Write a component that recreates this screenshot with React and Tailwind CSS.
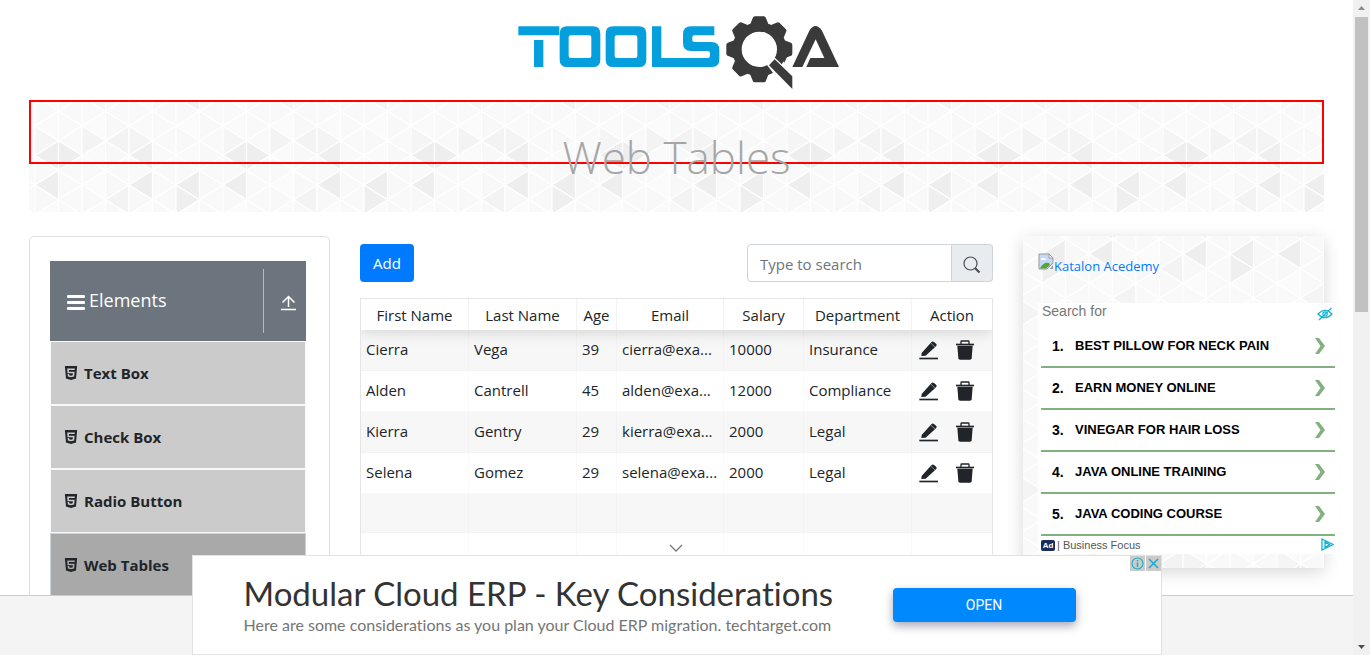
import React from 'react';
import { SiHtml5 } from 'react-icons/si';

const COL = 23.5;
const SIDE = 29.5;
const TILE_ROWS = 6;

const SHADED = {
  '0:2': '#eeeeee', '1:2': '#eeeeee', '0:1': '#f5f5f5', '0:4': '#eeeeee',
  '2:1': '#f3f3f3', '3:1': '#f3f3f3', '4:2': '#efefef', '4:1': '#f4f4f4',
  '4:4': '#eeeeee', '3:5': '#f3f3f3', '6:4': '#eeeeee', '6:5': '#efefef',
  '6:10': '#f2f2f2', '2:10': '#f5f5f5', '5:8': '#f4f4f4', '1:7': '#f4f4f4',
};

const SOFT = ['#fafafa', '#f9f9f9', '#fbfbfb', '#f8f8f8'];

// Apexes sit on a half-row lattice; an even row's apex is on an even column line.
function buildTriangles() {
  const out = [];
  const rows = TILE_ROWS * 2;
  for (let strip = 0; strip < 8; strip += 1) {
    for (let row = -3; row <= rows; row += 1) {
      const wrapped = (row + rows) % rows;
      const y = 26 + row * (SIDE / 2);
      const apexLeft = strip % 2 === wrapped % 2;
      const x0 = strip * COL;
      const x1 = x0 + COL;
      const ax = apexLeft ? x0 : x1;
      const bx = apexLeft ? x1 : x0;
      out.push({
        key: strip + ':' + row,
        points: `${ax},${y} ${bx},${y - SIDE / 2} ${bx},${y + SIDE / 2}`,
        fill: SHADED[strip + ':' + wrapped] || SOFT[(strip * 5 + wrapped * 3 + strip * wrapped) % 4],
      });
    }
  }
  return out;
}

const TRIANGLES = buildTriangles();

function Facets({ id, x, y }) {
  return (
    <svg className="absolute inset-0 h-full w-full" aria-hidden="true">
      <defs>
        <pattern id={id} x={x} y={y} width={COL * 8} height={SIDE * TILE_ROWS} patternUnits="userSpaceOnUse">
          {TRIANGLES.map((t) => (
            <polygon key={t.key} points={t.points} fill={t.fill} stroke="#ffffff" strokeWidth="1.2" />
          ))}
        </pattern>
      </defs>
      <rect width="100%" height="100%" fill={`url(#${id})`} />
    </svg>
  );
}

function Logo() {
  const teeth = [0, 90, 135, 180, 225, 270, 315];
  return (
    <svg className="h-[100px] w-[360px]" viewBox="-10 0 1080 300" role="img" aria-label="ToolsQA">
      <g fill="#069fde">
        <path d="M54 79H177V106H54ZM101 120H129V201H101Z" />
        <path fillRule="evenodd" d="M200 79H278Q300 79 300 101V179Q300 201 278 201H200Q178 201 178 179V101Q178 79 200 79ZM211 106Q205 106 205 112V168Q205 174 211 174H267Q273 174 273 168V112Q273 106 267 106Z" />
        <path fillRule="evenodd" d="M338 79H416Q438 79 438 101V179Q438 201 416 201H338Q316 201 316 179V101Q316 79 338 79ZM349 106Q343 106 343 112V168Q343 174 349 174H405Q411 174 411 168V112Q411 106 405 106Z" />
        <path d="M642 79H572Q548 79 548 103V130Q548 153 572 153H622Q629 153 629 160V167Q629 174 622 174H483V79H455V201H635Q657 201 657 178V150Q657 126 633 126H582Q576 126 576 120V112Q576 106 582 106H642Z" />
      </g>
      <circle cx="777" cy="148" r="67" fill="none" stroke="#3a3a3b" strokeWidth="28" />
      {teeth.map((a) => (
        <path key={a} transform={`rotate(${a} 777 148)`} d="M848 119L868 127Q876 129 876 134V162Q876 167 868 169L848 177Z" fill="#3a3a3b" />
      ))}
      <path d="M796 190L818 168L900 245V300L842 250Z" fill="#ffffff" />
      <path d="M832 162L852 188L862 166L866 148L840 148Z" fill="#3a3a3b" />
      <path d="M806 196L823 178L876 229V267Z" fill="#3a3a3b" />
      <path d="M876 201L927 92Q945 64 965 92L1016 201H918L930 174H972L946 118L906 201Z" fill="#3a3a3b" />
    </svg>
  );
}

function EditIcon() {
  return (
    <svg width="20" height="20" viewBox="0 0 60 60" fill="#212529" aria-hidden="true">
      <path d="M7 48L8 39L37 7Q41 2 45 6L52 12Q55 15 51 19L20 47Z" />
      <path d="M35 9L49 22" stroke="#f7f7f7" strokeWidth="1.5" />
      <rect x="1" y="53" width="56" height="5" />
    </svg>
  );
}

function TrashIcon() {
  return (
    <svg width="20" height="20" viewBox="0 0 60 60" fill="#212529" aria-hidden="true">
      <path d="M18 12V5Q18 3 20 3H40Q42 3 42 5V12" fill="none" stroke="#212529" strokeWidth="4" />
      <rect x="3" y="11" width="54" height="5" />
      <path d="M7 17H53L50 55Q49 59 45 59H15Q11 59 10 55Z" />
    </svg>
  );
}

const ROWS = [
  ['Cierra', 'Vega', '39', 'cierra@exa...', '10000', 'Insurance'],
  ['Alden', 'Cantrell', '45', 'alden@exa...', '12000', 'Compliance'],
  ['Kierra', 'Gentry', '29', 'kierra@exa...', '2000', 'Legal'],
  ['Selena', 'Gomez', '29', 'selena@exa...', '2000', 'Legal'],
];

const HEADS = ['First Name', 'Last Name', 'Age', 'Email', 'Salary', 'Department', 'Action'];
const MENU = ['Text Box', 'Check Box', 'Radio Button', 'Web Tables'];
const LINKS = ['BEST PILLOW FOR NECK PAIN', 'EARN MONEY ONLINE', 'VINEGAR FOR HAIR LOSS', 'JAVA ONLINE TRAINING', 'JAVA CODING COURSE'];

function Sidebar() {
  return (
    <nav className="rounded-[5px] border border-[#dfdfdf] pt-6 pr-[23px] pb-6 pl-5">
      <button type="button" className="flex h-20 w-full items-center bg-[#6c757d] pl-4 text-left text-white">
        <svg width="20" height="16" viewBox="0 0 20 16" fill="#fff" className="mt-1 shrink-0" aria-hidden="true">
          <rect x="1" y="0" width="18" height="3" rx="1" />
          <rect x="1" y="6" width="18" height="3" rx="1" />
          <rect x="1" y="12" width="18" height="3" rx="1" />
        </svg>
        <span className="ml-[3px] grow pb-0.5 text-lg">Elements</span>
        <span className="flex h-16 w-[43px] items-center justify-end border-l border-[#b5babe] pr-[10px]">
          <svg width="15" height="16" viewBox="0 0 15 16" fill="none" stroke="#fff" strokeWidth="1.5" className="mt-1" aria-hidden="true">
            <path d="M7.5 12V1.5M1.5 7.5L7.5 1.5L13.5 7.5" />
            <path d="M0 14.5H15" />
          </svg>
        </span>
      </button>
      <ul>
        {MENU.map((m) => (
          <li key={m}>
            <a
              href="#"
              className={
                'flex h-16 items-center gap-1.5 border pl-[13px] text-[15px] font-bold text-[#212529] ' +
                (m === 'Web Tables' ? 'border-[#ced4da] bg-[#a9a9a9]' : 'border-[#f8f9fa] bg-[#cbcbcb]')
              }
            >
              <SiHtml5 className="h-3.5 w-3.5" aria-hidden="true" />
              {m}
            </a>
          </li>
        ))}
      </ul>
    </nav>
  );
}

const HEAD_CELL = 'h-[31px] border-r border-black/5 p-0 pt-0.5 text-center font-normal last:border-r-0';
const CELL = 'border-r border-black/2 p-0 px-[5px] pb-0.5 whitespace-nowrap last:border-r-0';

function People() {
  return (
    <section className="min-w-0 pt-2">
      <div className="flex items-start justify-between">
        <button type="button" className="h-[38px] rounded bg-[#007bff] px-[13px] text-[15px] text-white">Add</button>
        <div className="flex h-[38px] w-[246px]">
          <input
            type="text"
            aria-label="Search"
            placeholder="Type to search"
            className="min-w-0 grow rounded-l border border-[#ced4da] bg-white px-3 pt-0.5 text-[15px] placeholder:text-[#6c757d]"
          />
          <button type="button" aria-label="Search" className="flex w-[41px] shrink-0 items-center justify-center rounded-r border border-l-0 border-[#ced4da] bg-[#e9ecef] pt-1">
            <svg width="18" height="18" viewBox="0 0 18 18" fill="none" stroke="#495057" aria-hidden="true">
              <circle cx="7.5" cy="7.5" r="6.5" strokeWidth="1.2" />
              <path d="M12 12L16.5 16.5" strokeWidth="2.2" />
            </svg>
          </button>
        </div>
      </div>
      <div className="mt-4 overflow-hidden border border-black/10">
        <table className="w-full table-fixed border-separate border-spacing-0 text-[15px] text-[#212529]">
          <colgroup>
            <col className="w-[108px]" />
            <col className="w-[108px]" />
            <col className="w-[40px]" />
            <col className="w-[107px]" />
            <col className="w-[80px]" />
            <col className="w-[108px]" />
            <col className="w-[80px]" />
          </colgroup>
          <thead className="relative z-10 shadow-[0_2px_15px_0_rgba(0,0,0,0.15)]">
            <tr>
              {HEADS.map((h) => (
                <th key={h} scope="col" className={HEAD_CELL}>{h}</th>
              ))}
            </tr>
          </thead>
          <tbody>
            {ROWS.map((r) => (
              <tr key={r[0]} className="h-[41px] odd:bg-black/3 [&>td]:border-b [&>td]:border-b-black/2">
                {r.map((c, i) => (
                  <td key={HEADS[i]} className={CELL}>{c}</td>
                ))}
                <td className="p-0">
                  <div className="flex gap-4 pl-[7px]">
                    <button type="button" aria-label={'Edit ' + r[0]}><EditIcon /></button>
                    <button type="button" aria-label={'Delete ' + r[0]}><TrashIcon /></button>
                  </div>
                </td>
              </tr>
            ))}
            {[1, 2, 3].map((n) => (
              <tr key={n} className="h-[39px] odd:bg-black/3 [&>td]:border-b [&>td]:border-b-black/2">
                {HEADS.map((h) => (
                  <td key={h} className={CELL} />
                ))}
              </tr>
            ))}
          </tbody>
        </table>
      </div>
    </section>
  );
}

function SearchAd() {
  return (
    <div className="w-[300px] bg-white pr-[3px] pl-[3px] font-['Liberation_Sans',Arial,sans-serif]">
      <div className="flex h-[23px] justify-between pl-px text-sm leading-4 text-[#777]">
        <span>Search for</span>
        <svg width="16" height="14" viewBox="0 0 16 14" fill="none" stroke="#16b1d0" strokeWidth="1.2" className="mt-1 mr-0.5" aria-hidden="true">
          <path d="M1 7Q8 -0.5 15 7Q8 14.5 1 7ZM2 13L14.5 1" />
          <circle cx="8" cy="7" r="2.2" />
        </svg>
      </div>
      <ol>
        {LINKS.map((l, i) => (
          <li key={l} className="border-b-2 border-[#82b07f]">
            <a href="#" className="flex h-10 items-center pr-[10px] pl-[11px] text-[13px] font-bold text-black">
              <span className="w-[23px] text-sm">{i + 1}.</span>
              <span className="grow">{l}</span>
              <svg width="10" height="16" viewBox="0 0 10 16" fill="#82b07f" aria-hidden="true">
                <path d="M0 0H4L10 8L4 16H0L5.5 8Z" />
              </svg>
            </a>
          </li>
        ))}
      </ol>
      <div className="flex h-[18px] items-start pt-px text-[11px] leading-4 text-[#555]">
        <span className="mt-[3px] flex h-[11px] w-[14px] items-center justify-center rounded-xs bg-[#182b5b] text-[8px] font-bold text-white">Ad</span>
        <span className="ml-0.5 grow whitespace-pre">| Business Focus</span>
        <svg width="13" height="13" viewBox="0 0 13 13" fill="none" stroke="#16b1d0" strokeWidth="1.3" className="mt-px mr-px" aria-hidden="true">
          <path d="M1 1L12 6.5L1 12ZM4 4V9.5L8.5 6.6Z" />
        </svg>
      </div>
    </div>
  );
}

function RightPanel() {
  return (
    <aside className="relative h-[332px] shadow-[0_4px_16px_rgba(0,0,0,0.16)]">
      <Facets id="facets-panel" x={66} y={-67} />
      <div className="relative pt-4 pl-[15px]">
        <a href="#" className="flex h-[51px] items-start text-[13px] text-[#007bff]">
          <svg width="16" height="17" viewBox="0 0 16 17" className="mt-px shrink-0" aria-hidden="true">
            <path d="M1 1H11L15 5V10L9 16H1Z" fill="#c5d8f6" stroke="#9a9a9a" />
            <path d="M11 1V5H15Z" fill="#fff" stroke="#9a9a9a" />
            <path d="M3 6Q4 4 6 5Q8 5 8 7H3Z" fill="#fff" />
            <path d="M2 15.5Q5 9 11 10L12 12L8 15.5Z" fill="#55a630" />
            <path d="M12 16H15V12Z" fill="#9a9a9a" />
          </svg>
          <span className="pt-[5px]">Katalon Acedemy</span>
        </a>
        <SearchAd />
      </div>
    </aside>
  );
}

function AnchorAd() {
  return (
    <div className="absolute inset-x-0 bottom-0 flex flex-col items-center">
      <svg width="14" height="8" viewBox="0 0 14 8" fill="none" stroke="#777" strokeWidth="1.3" className="mr-0.5 mb-[3px]" aria-hidden="true">
        <path d="M1 1L7 7L13 1" />
      </svg>
      <div className="relative flex h-[100px] w-[970px] max-w-full items-center justify-between border border-[#e2e2e2] bg-white pr-[85px] pl-[51px]">
        <div className="font-[Lato,sans-serif] [font-variant-ligatures:none]">
          <h2 className="text-[33px] leading-10 text-[#333]">Modular Cloud ERP - Key Considerations</h2>
          <p className="text-base leading-6 text-[#757575]">Here are some considerations as you plan your Cloud ERP migration. techtarget.com</p>
        </div>
        <button type="button" className="h-[34px] w-[183px] rounded bg-[#0088ff] font-[Roboto,sans-serif] text-sm text-white shadow-[0_4px_10px_rgba(0,0,40,0.35)]">OPEN</button>
        <div className="absolute top-0 right-0 flex gap-px">
          <button type="button" aria-label="About this ad" className="bg-[#cbcbcb]">
            <svg width="15" height="15" viewBox="0 0 15 15" fill="none" stroke="#12aecd" aria-hidden="true">
              <circle cx="7.5" cy="7.5" r="5.5" strokeWidth="1.1" />
              <path d="M7.5 6.5V11M7.5 4V5.3" strokeWidth="1.4" />
            </svg>
          </button>
          <button type="button" aria-label="Close ad" className="bg-[#cbcbcb]">
            <svg width="15" height="15" viewBox="0 0 15 15" fill="none" stroke="#12aecd" strokeWidth="1.5" aria-hidden="true">
              <path d="M3 3L12 12M12 3L3 12" />
            </svg>
          </button>
        </div>
      </div>
    </div>
  );
}

function Scrollbar() {
  return (
    <div className="flex w-[17px] shrink-0 flex-col items-center justify-between bg-[#f1f1f1]" aria-hidden="true">
      <div className="flex h-1/2 flex-col items-center">
        <svg width="17" height="17" viewBox="0 0 17 17"><path d="M5 10L8.5 6L12 10Z" fill="#8b8b8b" /></svg>
        <div className="h-[90%] w-[13px] bg-[#c1c1c1]" />
      </div>
      <svg width="17" height="17" viewBox="0 0 17 17"><path d="M5 7L8.5 11L12 7Z" fill="#505050" /></svg>
    </div>
  );
}

export default function App() {
  return (
    <div className="flex h-screen overflow-hidden bg-white font-['Open_Sans','Noto_Sans',sans-serif] text-[#212529]">
      <div className="relative flex min-w-0 grow flex-col">
        <div className="min-h-0 grow overflow-hidden px-[29px]">
          <header className="flex justify-center">
            <a href="#"><Logo /></a>
          </header>
          <div className="relative flex h-28 items-center justify-center">
            <Facets id="facets-banner" x={6} y={0} />
            <div className="absolute inset-x-0 top-0 h-16 border-2 border-[#ff0000]" />
            <h1 className="relative pt-0.5 text-[44px] font-light text-[#a6a6a6]">Web Tables</h1>
          </div>
          <main className="mt-6 grid grid-cols-[301px_minmax(0,1fr)_301px] items-start gap-[30px]">
            <Sidebar />
            <People />
            <RightPanel />
          </main>
        </div>
        <footer className="h-[60px] shrink-0 border-t border-[#ccc] bg-[#f4f4f4]" />
        <AnchorAd />
      </div>
      <Scrollbar />
    </div>
  );
}
